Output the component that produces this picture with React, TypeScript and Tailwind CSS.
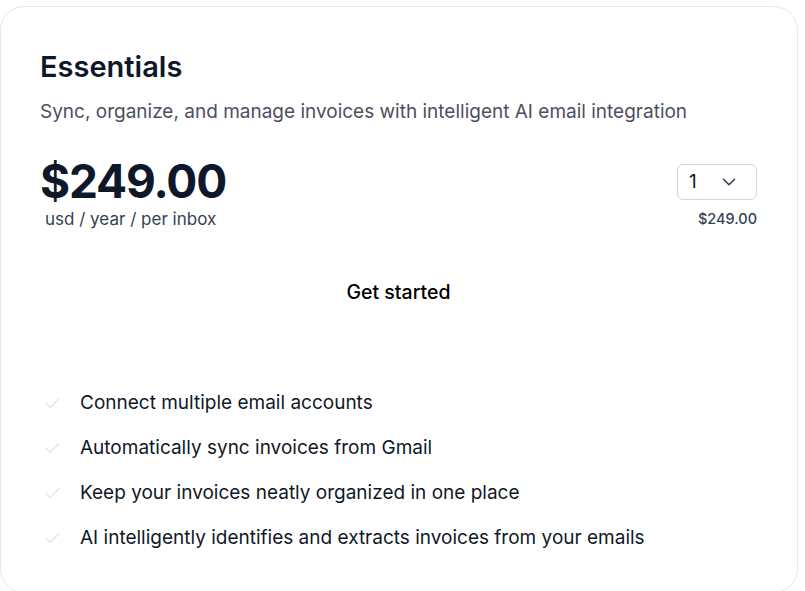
import { Check, ChevronDown } from 'lucide-react';

const features = [
  'Connect multiple email accounts',
  'Automatically sync invoices from Gmail',
  'Keep your invoices neatly organized in one place',
  'AI intelligently identifies and extracts invoices from your emails',
];

export default function App() {
  return (
    <div className="min-h-screen bg-white pt-[6px] pr-[7px] font-['Inter',sans-serif]">
      <div className="rounded-[24px] border border-gray-200 bg-white pt-[42px] pr-10 pb-10 pl-[39px]">
        <h2 className="text-[29px] leading-[36px] font-semibold text-[#0f172a]">Essentials</h2>
        <p className="mt-[13px] text-[19px] leading-[28px] text-[#4b5060]">
          Sync, organize, and manage invoices with intelligent AI email integration
        </p>

        <div className="mt-[27px] flex items-start justify-between">
          <div>
            <p className="text-[46px] leading-[56px] font-bold tracking-tight text-[#0f172a]">$249.00</p>
            <p className="mt-[-2px] pl-[5px] text-[17px] leading-[24px] text-gray-700">usd / year / per inbox</p>
          </div>
          <div className="flex flex-col items-end pt-[11px]">
            <button className="flex h-[36px] w-[80px] items-center justify-between rounded-md border border-gray-300 pr-[16px] pl-[11px] text-[19px] text-gray-900">
              <span>1</span>
              <ChevronDown className="h-[22px] w-[22px] text-gray-700" strokeWidth={1.75} />
            </button>
            <span className="mt-[9px] text-[14.5px] leading-[20px] font-medium text-gray-700">$249.00</span>
          </div>
        </div>

        <div className="mt-[47px] flex justify-center">
          <button className="text-[19.5px] leading-[28px] font-medium text-black">Get started</button>
        </div>

        <ul className="mt-[83px] flex flex-col gap-[17px]">
          {features.map((f) => (
            <li key={f} className="flex items-center gap-[18px]">
              <Check className="ml-[3px] h-[19px] w-[19px] text-gray-200" strokeWidth={2} />
              <span className="text-[19px] leading-[28px] text-gray-900">{f}</span>
            </li>
          ))}
        </ul>
      </div>
    </div>
  );
}
